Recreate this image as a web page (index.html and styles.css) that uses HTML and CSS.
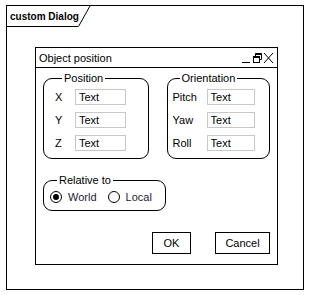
FILE: index.html
```html
<!DOCTYPE html>
<html lang="en">

<head>
    <meta charset="UTF-8" />
    <title>custom Dialog</title>
    <link rel="stylesheet" href="styles.css">
</head>

<body>
    <div class="frame">
        <div class="tab">
            <span class="tab-name">custom Dialog</span>
            <svg class="tab-corner" width="13" height="22" viewBox="0 0 13 22">
                <line x1="0.5" y1="21.5" x2="12.5" y2="0" stroke="#000" stroke-width="1" />
            </svg>
        </div>

        <div class="dialog">
            <div class="titlebar">
                <span class="title">Object position</span>
                <div class="win-buttons">
                    <svg width="32" height="12" viewBox="0 0 32 12">
                        <line x1="0" y1="10.5" x2="8" y2="10.5" stroke="#000" />
                        <rect x="11.5" y="4.5" width="6" height="6" fill="none" stroke="#000" />
                        <line x1="11.5" y1="5" x2="17.5" y2="5" stroke="#000" stroke-width="2" />
                        <polyline points="13.5,4.5 13.5,1.5 19.5,1.5 19.5,7.5 17.5,7.5" fill="none" stroke="#000" />
                        <line x1="13.5" y1="2" x2="19.5" y2="2" stroke="#000" stroke-width="2" />
                        <line x1="22" y1="1" x2="31" y2="11" stroke="#000" />
                        <line x1="31" y1="1" x2="22" y2="11" stroke="#000" />
                    </svg>
                </div>
            </div>

            <div class="content">
                <div class="groups">
                    <fieldset class="group position">
                        <legend>Position</legend>
                        <div class="row"><label>X</label><input type="text" value="Text" /></div>
                        <div class="row"><label>Y</label><input type="text" value="Text" /></div>
                        <div class="row"><label>Z</label><input type="text" value="Text" /></div>
                    </fieldset>

                    <fieldset class="group orientation">
                        <legend>Orientation</legend>
                        <div class="row"><label>Pitch</label><input type="text" value="Text" /></div>
                        <div class="row"><label>Yaw</label><input type="text" value="Text" /></div>
                        <div class="row"><label>Roll</label><input type="text" value="Text" /></div>
                    </fieldset>
                </div>

                <fieldset class="group relative">
                    <legend>Relative to</legend>
                    <label class="radio"><span class="dot checked"></span>World</label>
                    <label class="radio"><span class="dot"></span>Local</label>
                </fieldset>

                <div class="actions">
                    <button class="btn ok">OK</button>
                    <button class="btn cancel">Cancel</button>
                </div>
            </div>
        </div>
    </div>
</body>

</html>
```

FILE: styles.css
```css
body {
    margin: 0;
    background-color: #fff;
    font-family: "Liberation Sans", Arial, sans-serif;
    font-size: 11px;
    color: #000;
}

.frame {
    box-sizing: border-box;
    width: 298px;
    height: 285px;
    margin: 5px 0 0 6px;
    border: 1px solid #000;
}

.tab {
    display: flex;
    align-items: flex-end;
    height: 21px;
}

.tab-name {
    box-sizing: border-box;
    height: 21px;
    width: 71px;
    padding: 5px 0 0 3px;
    border-bottom: 1px solid #000;
    font-size: 10px;
    font-weight: bold;
    white-space: nowrap;
}

.tab-corner {
    display: block;
    margin-top: -1px;
}

.dialog {
    box-sizing: border-box;
    width: 243px;
    height: 218px;
    margin: 20px 0 0 28px;
    border: 1px solid #000;
}

.titlebar {
    display: flex;
    justify-content: space-between;
    align-items: center;
    height: 19px;
    padding: 0 3px;
    border-bottom: 1px solid #000;
}

.win-buttons svg {
    display: block;
}

.content {
    padding: 5px 7px 0 7px;
}

.groups {
    display: flex;
    gap: 18px;
}

.group {
    box-sizing: border-box;
    margin: 0;
    border: 1px solid #000;
    border-radius: 9px;
    padding: 0;
}

.group legend {
    padding: 0 2px;
    margin-left: 7px;
    line-height: 11px;
}

.position {
    width: 106px;
    height: 86px;
    padding: 5px 0 0 11px;
}

.orientation {
    width: 104px;
    height: 86px;
    padding: 5px 0 0 5px;
}

.row {
    display: flex;
    align-items: center;
    height: 16px;
    margin-bottom: 7px;
}

.row label {
    width: 20px;
}

.orientation .row label {
    width: 34px;
}

.row input {
    box-sizing: border-box;
    width: 51px;
    height: 16px;
    padding: 0 0 0 3px;
    border: 1px solid #c8c8c8;
    font-family: inherit;
    font-size: 11px;
    color: #000;
}

.orientation .row input {
    width: 48px;
}

.relative {
    display: flex;
    align-items: center;
    gap: 11px;
    width: 123px;
    height: 36px;
    margin-top: 16px;
    padding: 0 0 2px 6px;
}

.radio {
    display: flex;
    align-items: center;
    gap: 6px;
    color: #1c1c34;
}

.dot {
    box-sizing: border-box;
    width: 12px;
    height: 12px;
    border: 1px solid #000;
    border-radius: 50%;
    display: flex;
    align-items: center;
    justify-content: center;
}

.dot.checked::after {
    content: "";
    width: 6px;
    height: 6px;
    border-radius: 50%;
    background-color: #000;
}

.actions {
    display: flex;
    justify-content: flex-end;
    gap: 24px;
    margin-top: 21px;
}

.btn {
    box-sizing: border-box;
    height: 22px;
    padding: 0;
    border: 1px solid #000;
    background-color: #fff;
    font-family: inherit;
    font-size: 11px;
    color: #000;
}

.ok {
    width: 39px;
}

.cancel {
    width: 55px;
}
```
